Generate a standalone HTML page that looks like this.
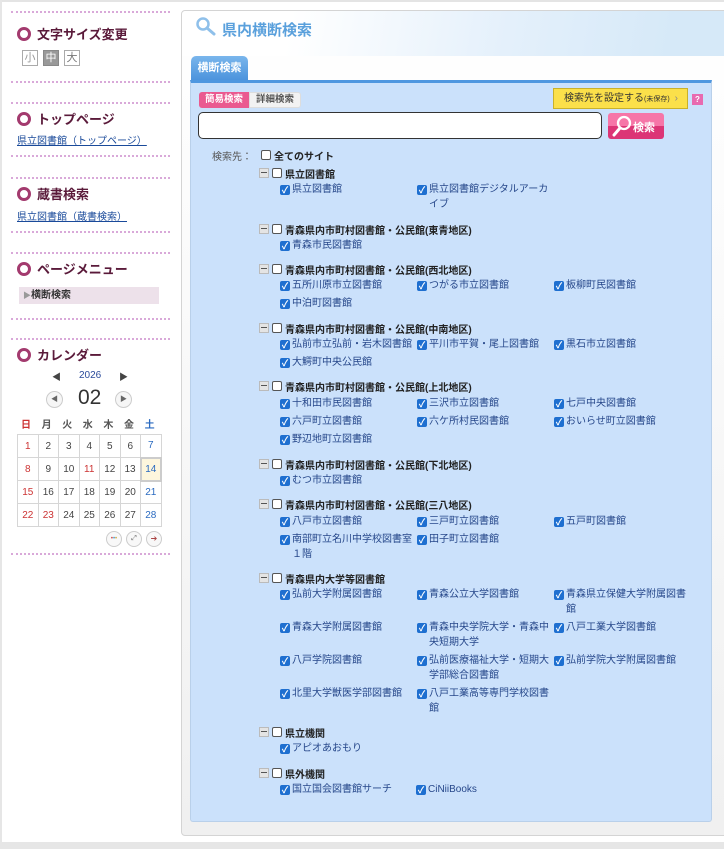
<!DOCTYPE html>
<html><head><meta charset="utf-8"><style>
*{box-sizing:border-box;margin:0;padding:0}
body{width:724px;height:849px;background:#e6e6e6;font-family:"Liberation Sans","Noto Sans CJK JP",sans-serif;position:relative;overflow:hidden}
.page{position:absolute;left:2px;top:0;width:722px;height:842px;background:#fff;border-top:2px solid #e4e4e4}
.a{position:absolute;white-space:nowrap}
.dot{position:absolute;left:9px;width:159px;border-top:2px dotted #d9a9d9}
.h{position:absolute;left:15px;font-size:13px;font-weight:bold;color:#5a1a3a;display:flex;align-items:center}
.h:before{content:"";width:8px;height:8px;border:3px solid #a33a6e;border-radius:50%;margin-right:6px}
.lk{position:absolute;left:15px;font-size:10px;color:#1a4a9a;text-decoration:underline}
.cal td{width:20.5px;height:23px;border:1px solid #d6d6d6;text-align:center;font-size:10px;color:#444}
.cal{border-collapse:collapse;position:absolute;left:15px;top:432px}
.cb{position:absolute;width:10px;height:10px;background:#1e6fd0;border-radius:2px;color:#fff;font-size:9px;line-height:10px;text-align:center;font-weight:bold}
.ub{position:absolute;width:10px;height:10px;background:#fff;border:1px solid #555;border-radius:2px}
.mn{position:absolute;width:10px;height:10px;background:#e4e4e4;border:1px solid #bbb}
.mn:after{content:"";position:absolute;left:1px;right:1px;top:3px;border-top:1.5px solid #555}
.t{position:absolute;font-size:10px;color:#26478a;line-height:15px}
.g{position:absolute;font-size:10px;color:#222;font-weight:bold}
</style></head><body>
<div class="page">
<div class="dot" style="top:9px"></div>
<div class="h" style="top:22px">文字サイズ変更</div>
<div class="a" style="left:20px;top:48px;width:16px;height:16px;border:1px solid #aaa;font-size:11px;color:#999;text-align:center;line-height:14px">小</div>
<div class="a" style="left:41px;top:48px;width:16px;height:16px;background:#999;border:1px solid #888;font-size:11px;color:#fff;text-align:center;line-height:14px">中</div>
<div class="a" style="left:62px;top:48px;width:16px;height:16px;border:1px solid #aaa;font-size:11px;color:#777;text-align:center;line-height:14px">大</div>
<div class="dot" style="top:79px"></div>
<div class="dot" style="top:100px"></div>
<div class="h" style="top:107px">トップページ</div>
<div class="lk" style="top:130px">県立図書館（トップページ）</div>
<div class="dot" style="top:153px"></div>
<div class="dot" style="top:175px"></div>
<div class="h" style="top:182px">蔵書検索</div>
<div class="lk" style="top:206px">県立図書館（蔵書検索）</div>
<div class="dot" style="top:229px"></div>
<div class="dot" style="top:250px"></div>
<div class="h" style="top:257px">ページメニュー</div>
<div class="a" style="left:17px;top:285px;width:140px;height:17px;background:#ede1ea;font-size:10px;font-weight:bold;color:#333;line-height:17px;padding-left:4px"><span style="color:#999;font-size:8px">▶</span>横断検索</div>
<div class="dot" style="top:316px"></div>
<div class="dot" style="top:336px"></div>
<div class="h" style="top:343px">カレンダー</div>
<div class="a" style="left:50px;top:368px;font-size:9px;color:#444">◀</div>
<div class="a" style="left:77px;top:368px;font-size:10px;color:#2a4a9a">2026</div>
<div class="a" style="left:117px;top:368px;font-size:9px;color:#444">▶</div>
<div class="a" style="left:44px;top:389px;width:17px;height:17px;border-radius:50%;border:1px solid #ccc;background:#f6f6f6;font-size:7px;color:#666;text-align:center;line-height:15px">◀</div>
<div class="a" style="left:76px;top:384px;font-size:21px;color:#333">02</div>
<div class="a" style="left:113px;top:389px;width:17px;height:17px;border-radius:50%;border:1px solid #ccc;background:#f6f6f6;font-size:7px;color:#666;text-align:center;line-height:15px">▶</div>
<div class="a" style="left:19px;top:414px;font-size:10px;font-weight:bold;color:#555;letter-spacing:10.6px"><span style="color:#c33">日</span>月火水木金<span style="color:#2a6ac0">土</span></div>
<table class="cal">
<tr><td style="color:#c33">1</td><td>2</td><td>3</td><td>4</td><td>5</td><td>6</td><td style="color:#2a6ac0">7</td></tr>
<tr><td style="color:#c33">8</td><td>9</td><td>10</td><td style="color:#c33">11</td><td>12</td><td>13</td><td style="color:#2a6ac0;background:#fdf6dd;border:2px solid #ccc">14</td></tr>
<tr><td style="color:#c33">15</td><td>16</td><td>17</td><td>18</td><td>19</td><td>20</td><td style="color:#2a6ac0">21</td></tr>
<tr><td style="color:#c33">22</td><td style="color:#c33">23</td><td>24</td><td>25</td><td>26</td><td>27</td><td style="color:#2a6ac0">28</td></tr>
</table>
<div class="a" style="left:104px;top:529px;width:16px;height:16px;border-radius:50%;border:1px solid #ccc;background:#f8f8f8;font-size:6px;line-height:14px;text-align:center;color:#c44">•<span style="color:#49c">•</span><span style="color:#ca4">•</span></div>
<div class="a" style="left:124px;top:529px;width:16px;height:16px;border-radius:50%;border:1px solid #ccc;background:#f8f8f8;font-size:7px;line-height:14px;text-align:center;color:#666">⤢</div>
<div class="a" style="left:144px;top:529px;width:16px;height:16px;border-radius:50%;border:1px solid #ccc;background:#f8f8f8;font-size:8px;line-height:14px;text-align:center;color:#a44">➔</div>
<div class="dot" style="top:551px"></div>
</div>

<div class="a" style="left:181px;top:10px;width:560px;height:826px;border:1px solid #d4d4d4;border-radius:4px;background:linear-gradient(#fff,#f0f0f0)"></div>
<div class="a" style="left:182px;top:11px;width:542px;height:45px;background:linear-gradient(100deg,#fff 20%,#e4f0fb 60%,#d6e9f8 90%);border-radius:4px 0 0 0"></div>
<svg class="a" style="left:195px;top:16px" width="22" height="20"><circle cx="8" cy="8" r="5.5" fill="none" stroke="#8fc0ea" stroke-width="2.5"/><line x1="12" y1="12" x2="19" y2="18" stroke="#8fc0ea" stroke-width="3" stroke-linecap="round"/></svg>
<div class="a" style="left:222px;top:19px;font-size:15px;font-weight:bold;color:#5aa0dc">県内横断検索</div>
<div class="a" style="left:191px;top:56px;width:57px;height:25px;background:linear-gradient(#7ab6ec,#4a92dc);border-radius:5px 5px 0 0;color:#fff;font-size:11px;font-weight:bold;line-height:25px;text-align:center">横断検索</div>
<div class="a" style="left:190px;top:80px;width:522px;height:742px;background:#cbe1fb;border-top:3px solid #4f97e0;border-radius:0 0 3px 3px;border-left:1px solid #b9d0ea;border-right:1px solid #b9d0ea;border-bottom:1px solid #b9d0ea"></div>
<div class="a" style="left:199px;top:92px;width:50px;height:16px;background:#ea5a90;border-radius:3px 0 0 3px;color:#fff;font-size:9.5px;font-weight:bold;text-align:center;line-height:16px">簡易検索</div>
<div class="a" style="left:249px;top:92px;width:52px;height:16px;background:#f2f2f2;border:1px solid #ddd;border-radius:0 3px 3px 0;color:#555;font-size:9.5px;font-weight:bold;text-align:center;line-height:14px">詳細検索</div>
<div class="a" style="left:553px;top:88px;width:135px;height:21px;background:#fbe04a;border:1px solid #c9b12a;font-size:10px;color:#333;line-height:19px;padding-left:10px">検索先を設定する<span style="font-size:7px">(未保存)</span><span style="color:#888;margin-left:5px">›</span></div>
<div class="a" style="left:692px;top:94px;width:11px;height:11px;background:#e86ab0;color:#fff;font-size:8px;font-weight:bold;text-align:center;line-height:11px">?</div>
<div class="a" style="left:198px;top:112px;width:404px;height:27px;background:#fff;border:1px solid #333;border-radius:5px"></div>
<div class="a" style="left:608px;top:113px;width:56px;height:26px;border-radius:3px;background:linear-gradient(#f676a8 50%,#dc3576 50%)"></div>
<svg class="a" style="left:610px;top:114px" width="24" height="24"><circle cx="14" cy="9" r="6" fill="none" stroke="#fff" stroke-width="2.3"/><line x1="10" y1="14" x2="4" y2="21" stroke="#fff" stroke-width="3" stroke-linecap="round"/></svg>
<div class="a" style="left:633px;top:119px;font-size:11px;color:#fff;font-weight:bold">検索</div>

<div class="a" style="left:212px;top:148px;font-size:10px;color:#555">検索先：</div>
<div class="ub" style="left:261px;top:150px"></div><div class="g" style="left:274px;top:148px">全てのサイト</div>

<div class="mn" style="left:259px;top:168px"></div><div class="ub" style="left:272px;top:168px"></div><div class="g" style="left:285px;top:166px">県立図書館</div>
<div class="cb" style="left:280px;top:185px">✓</div><div class="t" style="left:292px;top:182px">県立図書館</div>
<div class="cb" style="left:417px;top:185px">✓</div><div class="t" style="left:429px;top:182px;width:120px;white-space:normal">県立図書館デジタルアーカイブ</div>

<div class="mn" style="left:259px;top:224px"></div><div class="ub" style="left:272px;top:224px"></div><div class="g" style="left:285px;top:222px">青森県内市町村図書館・公民館(東青地区)</div>
<div class="cb" style="left:280px;top:241px">✓</div><div class="t" style="left:292px;top:238px">青森市民図書館</div>

<div class="mn" style="left:259px;top:264px"></div><div class="ub" style="left:272px;top:264px"></div><div class="g" style="left:285px;top:262px">青森県内市町村図書館・公民館(西北地区)</div>
<div class="cb" style="left:280px;top:281px">✓</div><div class="t" style="left:292px;top:278px">五所川原市立図書館</div>
<div class="cb" style="left:417px;top:281px">✓</div><div class="t" style="left:429px;top:278px">つがる市立図書館</div>
<div class="cb" style="left:554px;top:281px">✓</div><div class="t" style="left:566px;top:278px">板柳町民図書館</div>
<div class="cb" style="left:280px;top:299px">✓</div><div class="t" style="left:292px;top:296px">中泊町図書館</div>

<div class="mn" style="left:259px;top:323px"></div><div class="ub" style="left:272px;top:323px"></div><div class="g" style="left:285px;top:321px">青森県内市町村図書館・公民館(中南地区)</div>
<div class="cb" style="left:280px;top:340px">✓</div><div class="t" style="left:292px;top:337px">弘前市立弘前・岩木図書館</div>
<div class="cb" style="left:417px;top:340px">✓</div><div class="t" style="left:429px;top:337px">平川市平賀・尾上図書館</div>
<div class="cb" style="left:554px;top:340px">✓</div><div class="t" style="left:566px;top:337px">黒石市立図書館</div>
<div class="cb" style="left:280px;top:358px">✓</div><div class="t" style="left:292px;top:355px">大鰐町中央公民館</div>

<div class="mn" style="left:259px;top:381px"></div><div class="ub" style="left:272px;top:381px"></div><div class="g" style="left:285px;top:379px">青森県内市町村図書館・公民館(上北地区)</div>
<div class="cb" style="left:280px;top:399px">✓</div><div class="t" style="left:292px;top:396px">十和田市民図書館</div>
<div class="cb" style="left:417px;top:399px">✓</div><div class="t" style="left:429px;top:396px">三沢市立図書館</div>
<div class="cb" style="left:554px;top:399px">✓</div><div class="t" style="left:566px;top:396px">七戸中央図書館</div>
<div class="cb" style="left:280px;top:417px">✓</div><div class="t" style="left:292px;top:414px">六戸町立図書館</div>
<div class="cb" style="left:417px;top:417px">✓</div><div class="t" style="left:429px;top:414px">六ケ所村民図書館</div>
<div class="cb" style="left:554px;top:417px">✓</div><div class="t" style="left:566px;top:414px">おいらせ町立図書館</div>
<div class="cb" style="left:280px;top:435px">✓</div><div class="t" style="left:292px;top:432px">野辺地町立図書館</div>

<div class="mn" style="left:259px;top:459px"></div><div class="ub" style="left:272px;top:459px"></div><div class="g" style="left:285px;top:457px">青森県内市町村図書館・公民館(下北地区)</div>
<div class="cb" style="left:280px;top:476px">✓</div><div class="t" style="left:292px;top:473px">むつ市立図書館</div>

<div class="mn" style="left:259px;top:499px"></div><div class="ub" style="left:272px;top:499px"></div><div class="g" style="left:285px;top:497px">青森県内市町村図書館・公民館(三八地区)</div>
<div class="cb" style="left:280px;top:517px">✓</div><div class="t" style="left:292px;top:514px">八戸市立図書館</div>
<div class="cb" style="left:417px;top:517px">✓</div><div class="t" style="left:429px;top:514px">三戸町立図書館</div>
<div class="cb" style="left:554px;top:517px">✓</div><div class="t" style="left:566px;top:514px">五戸町図書館</div>
<div class="cb" style="left:280px;top:535px">✓</div><div class="t" style="left:292px;top:532px;width:122px;white-space:normal">南部町立名川中学校図書室１階</div>
<div class="cb" style="left:417px;top:535px">✓</div><div class="t" style="left:429px;top:532px">田子町立図書館</div>

<div class="mn" style="left:259px;top:573px"></div><div class="ub" style="left:272px;top:573px"></div><div class="g" style="left:285px;top:571px">青森県内大学等図書館</div>
<div class="cb" style="left:280px;top:590px">✓</div><div class="t" style="left:292px;top:587px">弘前大学附属図書館</div>
<div class="cb" style="left:417px;top:590px">✓</div><div class="t" style="left:429px;top:587px">青森公立大学図書館</div>
<div class="cb" style="left:554px;top:590px">✓</div><div class="t" style="left:566px;top:587px;width:122px;white-space:normal">青森県立保健大学附属図書館</div>
<div class="cb" style="left:280px;top:623px">✓</div><div class="t" style="left:292px;top:620px">青森大学附属図書館</div>
<div class="cb" style="left:417px;top:623px">✓</div><div class="t" style="left:429px;top:620px;width:122px;white-space:normal">青森中央学院大学・青森中央短期大学</div>
<div class="cb" style="left:554px;top:623px">✓</div><div class="t" style="left:566px;top:620px">八戸工業大学図書館</div>
<div class="cb" style="left:280px;top:656px">✓</div><div class="t" style="left:292px;top:653px">八戸学院図書館</div>
<div class="cb" style="left:417px;top:656px">✓</div><div class="t" style="left:429px;top:653px;width:122px;white-space:normal">弘前医療福祉大学・短期大学部総合図書館</div>
<div class="cb" style="left:554px;top:656px">✓</div><div class="t" style="left:566px;top:653px">弘前学院大学附属図書館</div>
<div class="cb" style="left:280px;top:689px">✓</div><div class="t" style="left:292px;top:686px">北里大学獣医学部図書館</div>
<div class="cb" style="left:417px;top:689px">✓</div><div class="t" style="left:429px;top:686px;width:122px;white-space:normal">八戸工業高等専門学校図書館</div>

<div class="mn" style="left:259px;top:727px"></div><div class="ub" style="left:272px;top:727px"></div><div class="g" style="left:285px;top:725px">県立機関</div>
<div class="cb" style="left:280px;top:744px">✓</div><div class="t" style="left:292px;top:741px">アピオあおもり</div>

<div class="mn" style="left:259px;top:768px"></div><div class="ub" style="left:272px;top:768px"></div><div class="g" style="left:285px;top:766px">県外機関</div>
<div class="cb" style="left:280px;top:785px">✓</div><div class="t" style="left:292px;top:782px">国立国会図書館サーチ</div>
<div class="cb" style="left:416px;top:785px">✓</div><div class="t" style="left:428px;top:782px">CiNiiBooks</div>
</body></html>
